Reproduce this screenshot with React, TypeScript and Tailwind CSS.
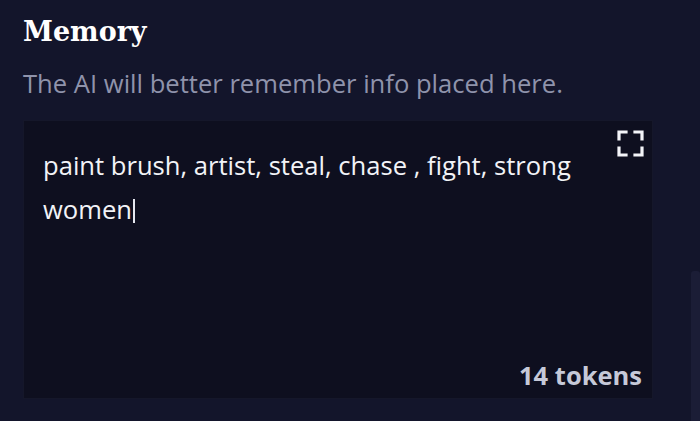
import React from "react";

export default function App() {
  return (
    <div className="flex h-[421px] w-[700px] overflow-hidden bg-[#13152b]">
      <div className="flex flex-1 flex-col pl-[23px] pr-[38px]">
        <h1
          className="mt-[15px] text-[27px] font-bold leading-[34px] text-white"
          style={{ fontFamily: '"DejaVu Serif", serif' }}
        >
          Memory
        </h1>
        <p
          className="mt-[20px] text-[25.6px] leading-[30px] text-[#8f93ab]"
          style={{ fontFamily: '"Open Sans", sans-serif' }}
        >
          The AI will better remember info placed here.
        </p>
        <div className="relative mt-[21px] flex h-[279px] flex-col border border-[#15172a] bg-[#0e0f1f] pl-[19px] pr-[60px] pt-[23px]">
          <div
            className="text-[25.6px] leading-[44px] text-[#f2f3f7]"
            style={{ fontFamily: '"Open Sans", sans-serif' }}
          >
            paint brush, artist, steal, chase , fight, strong women
            <span className="ml-[1px] inline-block h-[24px] w-[1.5px] translate-y-[4px] bg-[#e5e7ef]" />
          </div>
          <svg
            className="absolute right-[8px] top-[9px]"
            width="27"
            height="27"
            viewBox="0 0 27 27"
            fill="none"
            stroke="#f3f4f8"
            strokeWidth="3.2"
            strokeLinecap="square"
          >
            <path d="M2 9V2h7" />
            <path d="M18 2h7v7" />
            <path d="M25 18v7h-7" />
            <path d="M9 25H2v-7" />
          </svg>
          <div
            className="absolute bottom-[8px] right-[10px] text-[25.5px] font-bold leading-[30px] text-[#c6c9d8]"
            style={{ fontFamily: '"Open Sans", sans-serif' }}
          >
            14 tokens
          </div>
        </div>
      </div>
      <div className="flex w-[9px] flex-col">
        <div className="h-[271px]" />
        <div className="flex-1 rounded-t-[3px] bg-[#1b1d36]" />
      </div>
    </div>
  );
}
